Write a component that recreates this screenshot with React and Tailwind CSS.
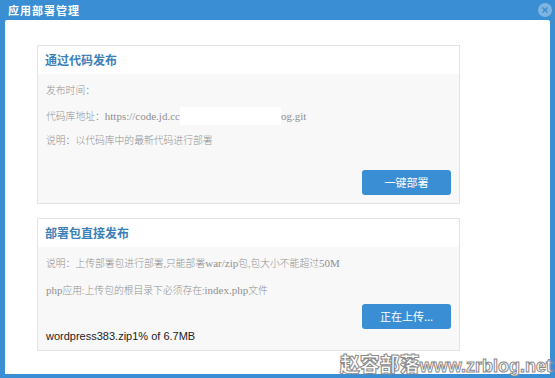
import React from "react";

function Card({ title, children, className = "" }) {
  return (
    <div className={"border border-[#e3e3e3] bg-[#f8f8f8] " + className}>
      <div className="h-[28px] bg-white flex items-center px-[7px]">
        <span className="text-[12px] font-bold text-[#3b80b8] [font-family:'Noto_Sans_CJK_SC',sans-serif]">{title}</span>
      </div>
      {children}
    </div>
  );
}

function Btn({ label }) {
  return (
    <button className="w-[89px] h-[25px] rounded-[3px] bg-[#3a8ed4] text-white text-[11px] [font-family:'Noto_Sans_CJK_SC',sans-serif]">
      {label}
    </button>
  );
}

export default function App() {
  const body = "text-[11px] text-[#909090] [font-family:'Liberation_Serif','Noto_Sans_CJK_SC',serif] leading-[14px]";
  const cjk = "text-[9.8px] [font-family:'Noto_Sans_CJK_SC',sans-serif] font-light";
  return (
    <div className="w-[555px] h-[378px] bg-[#3a8ed4] flex flex-col relative overflow-hidden">
      <div className="h-[20px] flex items-center justify-between pl-[8px] pr-[3px]">
        <span className="text-white text-[11px] font-bold tracking-[1px] [font-family:'Noto_Sans_CJK_SC',sans-serif]">应用部署管理</span>
        <span className="w-[14px] h-[14px] rounded-full bg-[#7fb4e0] flex items-center justify-center">
          <svg width="8" height="8" viewBox="0 0 8 8">
            <path d="M1.5 1.5L6.5 6.5M6.5 1.5L1.5 6.5" stroke="#3a8ed4" strokeWidth="1.5" />
          </svg>
        </span>
      </div>
      <div className="mx-[5px] h-[354px] bg-white rounded-t-[2px] pt-[25px] pl-[32px]">
        <Card title="通过代码发布" className="w-[423px] h-[159px]">
          <div className="px-[8px] pt-[2px] flex flex-col">
            <div className={body + " h-[27px] flex items-center"}><span className={cjk}>发布时间：</span></div>
            <div className={body + " h-[25px] flex items-center"}>
              <span className={cjk}>代码库地址：</span>
              <span>https://code.jd.cc</span>
              <span className="inline-block w-[101px] h-[18px] bg-white"></span>
              <span>og.git</span>
            </div>
            <div className={body + " h-[24px] flex items-center"}><span className={cjk}>说明：以代码库中的最新代码进行部署</span></div>
            <div className="flex justify-end pt-[18px]">
              <Btn label="一键部署" />
            </div>
          </div>
        </Card>
        <Card title="部署包直接发布" className="w-[423px] h-[133px] mt-[14px]">
          <div className="px-[8px] pt-[2px] flex flex-col">
            <div className={body + " h-[27px] flex items-center"}>
              <span className={cjk}>说明：上传部署包进行部署,只能部署</span>war/zip<span className={cjk}>包,包大小不能超过</span>50M
            </div>
            <div className={body + " h-[27px] flex items-center"}>
              php<span className={cjk}>应用:上传包的根目录下必须存在:</span>index.php<span className={cjk}>文件</span>
            </div>
            <div className="flex justify-end pt-[1px]">
              <Btn label="正在上传..." />
            </div>
            <div className="text-[11px] text-[#222] [font-family:'Liberation_Sans',sans-serif] leading-[14px]">wordpress383.zip1% of 6.7MB</div>
          </div>
        </Card>
      </div>
      <div className="absolute right-[3px] bottom-[1px] text-[20px] font-black text-white [font-family:'Noto_Sans_CJK_SC',sans-serif] [-webkit-text-stroke:1px_#8a8a8a] leading-[22px]">
        赵容部落<span className="[font-family:'Liberation_Sans',sans-serif] font-bold text-[18px]">www.zrblog.net</span>
      </div>
    </div>
  );
}
